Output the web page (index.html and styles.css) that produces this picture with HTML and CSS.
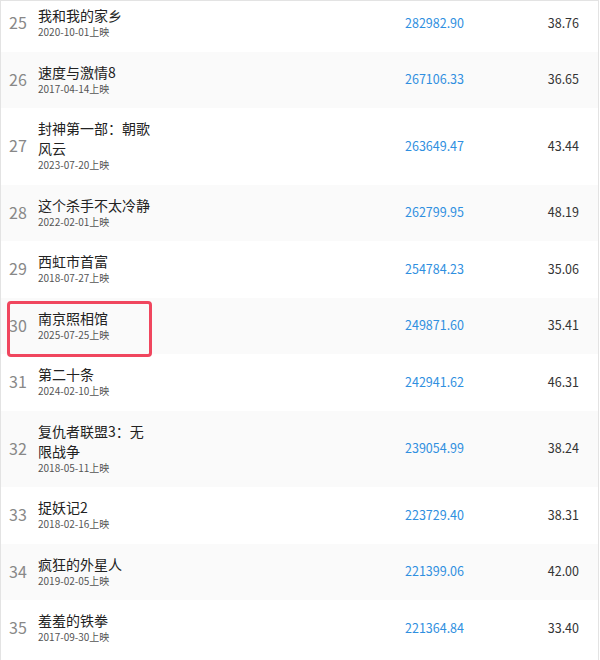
FILE: index.html
```html
<!DOCTYPE html>
<html lang="zh-CN">
<head>
    <meta charset="UTF-8">
    <title>票房榜</title>
    <link rel="stylesheet" href="styles.css">
</head>
<body>
    <div class="frame">
        <div class="list">
            <div class="row">
                <div class="rank">25</div>
                <div class="movie"><div class="title">我和我的家乡</div><div class="date">2020-10-01上映</div></div>
                <div class="box">282982.90</div>
                <div class="price">38.76</div>
            </div>
            <div class="row">
                <div class="rank">26</div>
                <div class="movie"><div class="title">速度与激情8</div><div class="date">2017-04-14上映</div></div>
                <div class="box">267106.33</div>
                <div class="price">36.65</div>
            </div>
            <div class="row">
                <div class="rank">27</div>
                <div class="movie"><div class="title">封神第一部：朝歌风云</div><div class="date">2023-07-20上映</div></div>
                <div class="box">263649.47</div>
                <div class="price">43.44</div>
            </div>
            <div class="row">
                <div class="rank">28</div>
                <div class="movie"><div class="title">这个杀手不太冷静</div><div class="date">2022-02-01上映</div></div>
                <div class="box">262799.95</div>
                <div class="price">48.19</div>
            </div>
            <div class="row">
                <div class="rank">29</div>
                <div class="movie"><div class="title">西虹市首富</div><div class="date">2018-07-27上映</div></div>
                <div class="box">254784.23</div>
                <div class="price">35.06</div>
            </div>
            <div class="row marked">
                <div class="rank">30</div>
                <div class="movie"><div class="title">南京照相馆</div><div class="date">2025-07-25上映</div></div>
                <div class="box">249871.60</div>
                <div class="price">35.41</div>
            </div>
            <div class="row">
                <div class="rank">31</div>
                <div class="movie"><div class="title">第二十条</div><div class="date">2024-02-10上映</div></div>
                <div class="box">242941.62</div>
                <div class="price">46.31</div>
            </div>
            <div class="row">
                <div class="rank">32</div>
                <div class="movie"><div class="title">复仇者联盟3：无限战争</div><div class="date">2018-05-11上映</div></div>
                <div class="box">239054.99</div>
                <div class="price">38.24</div>
            </div>
            <div class="row">
                <div class="rank">33</div>
                <div class="movie"><div class="title">捉妖记2</div><div class="date">2018-02-16上映</div></div>
                <div class="box">223729.40</div>
                <div class="price">38.31</div>
            </div>
            <div class="row">
                <div class="rank">34</div>
                <div class="movie"><div class="title">疯狂的外星人</div><div class="date">2019-02-05上映</div></div>
                <div class="box">221399.06</div>
                <div class="price">42.00</div>
            </div>
            <div class="row">
                <div class="rank">35</div>
                <div class="movie"><div class="title">羞羞的铁拳</div><div class="date">2017-09-30上映</div></div>
                <div class="box">221364.84</div>
                <div class="price">33.40</div>
            </div>
        </div>
    </div>
</body>
</html>
```
FILE: styles.css
```css
* {
    margin: 0;
    padding: 0;
    box-sizing: border-box;
}

body {
    background: #fff;
    font-family: "Noto Sans CJK SC", "Noto Sans", sans-serif;
    color: #333;
    overflow: hidden;
}

.frame {
    width: 599px;
    height: 660px;
    border: 1px solid #e3e3e3;
    border-bottom: none;
    overflow: hidden;
}

.list {
    margin-top: -6px;
}

.row {
    display: grid;
    grid-template-columns: 37px 1fr 130px 44px;
    align-items: center;
    padding: 10px 19px 12.5px 0;
    position: relative;
}

.row:nth-child(even) {
    background: #fafafa;
}

.rank {
    padding-left: 8px;
    font-size: 16px;
    color: #888;
}

.movie {
    width: 116px;
}

.title {
    font-size: 14px;
    line-height: 20px;
    color: #222;
}

.date {
    font-size: 10px;
    line-height: 14px;
    color: #555;
}

.box {
    font-size: 12.5px;
    color: #2f8fe0;
}

.price {
    font-size: 12.5px;
    color: #333;
    text-align: right;
}

.marked::after {
    content: "";
    position: absolute;
    left: 6px;
    top: 3px;
    width: 145px;
    height: 56px;
    box-sizing: border-box;
    border: 3px solid #f0465e;
    border-radius: 4px;
}
```
